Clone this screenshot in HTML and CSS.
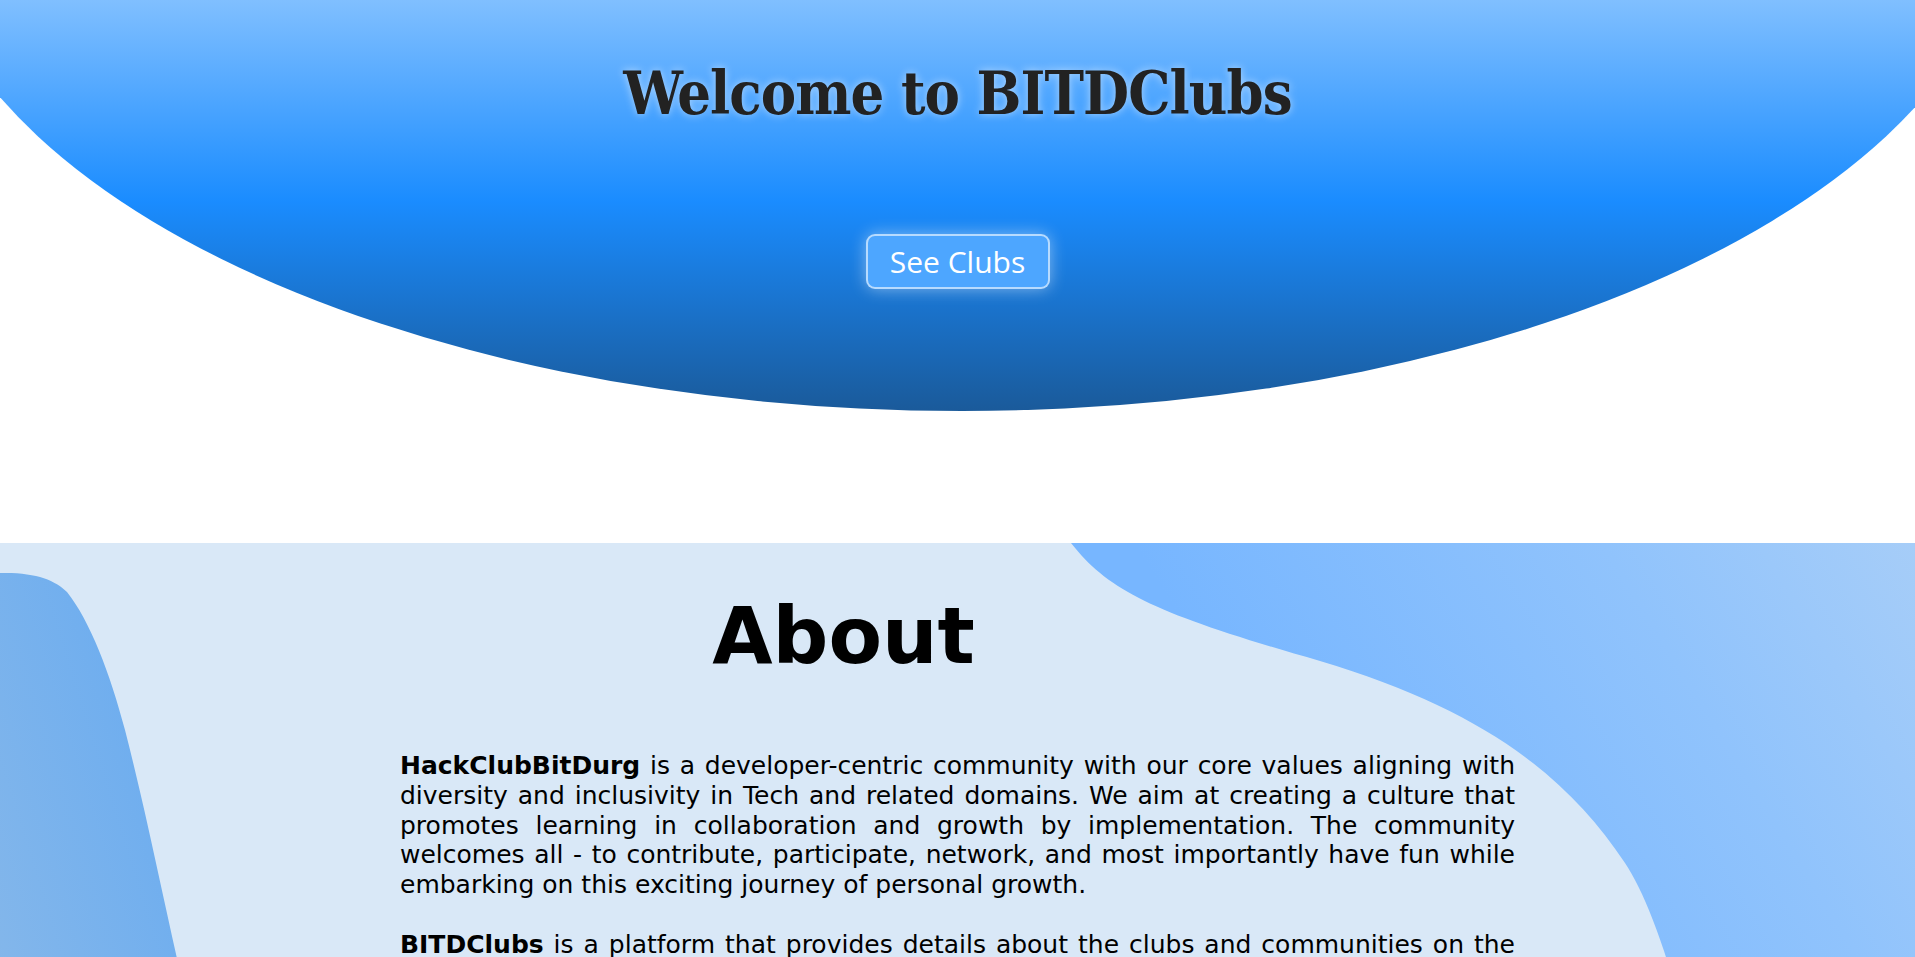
FILE: index.html
```html
<!DOCTYPE html>
<html lang="en">
<head>
<meta charset="utf-8">
<title>BITDClubs</title>
<link rel="stylesheet" href="styles.css">
</head>
<body>
  <header class="hero">
    <div class="hero-shape">
      <h1 class="hero-title">Welcome to BITDClubs</h1>
      <a class="hero-btn" href="#">See Clubs</a>
    </div>
  </header>
  <section class="about">
    <svg class="about-blobs" viewBox="0 0 1915 700" preserveAspectRatio="none" aria-hidden="true">
      <defs>
        <linearGradient id="gl" x1="1" y1="0" x2="0" y2="1">
          <stop offset="0" stop-color="#64a9f1"/>
          <stop offset="1" stop-color="#8bbae9"/>
        </linearGradient>
        <linearGradient id="gr" gradientUnits="userSpaceOnUse" x1="1350" y1="350" x2="1915" y2="0">
          <stop offset="0" stop-color="#77b6ff"/>
          <stop offset="0.6" stop-color="#90c3fc"/>
          <stop offset="1" stop-color="#a6cdf8"/>
        </linearGradient>
      </defs>
      <path fill="url(#gl)" d="M0,30 C35,29 55,37 67,49 C90,78 110,130 125,187 C145,265 160,340 178,420 L210,700 L0,700 Z"/>
      <path fill="url(#gr)" d="M1071,0 C1110,50 1160,72 1320,118 C1480,166 1565,230 1625,320 C1655,365 1690,470 1735,700 L1915,700 L1915,0 Z"/>
    </svg>
    <div class="about-inner">
      <h2 class="about-title">About</h2>
      <p class="about-text"><b>HackClubBitDurg</b> is a developer-centric community with our core values aligning with diversity and inclusivity in Tech and related domains. We aim at creating a culture that promotes learning in collaboration and growth by implementation. The community welcomes all - to contribute, participate, network, and most importantly have fun while embarking on this exciting journey of personal growth.</p>
      <p class="about-text"><b>BITDClubs</b> is a platform that provides details about the clubs and communities on the campus, so that every student can find a place to learn, build and grow together.</p>
    </div>
  </section>
</body>
</html>
```

FILE: styles.css
```css
html {
  scrollbar-width: none;
}
body {
  margin: 0;
  font-family: "DejaVu Sans", sans-serif;
  background: #ffffff;
  overflow-x: hidden;
}

.hero {
  height: 543px;
  background: #ffffff;
}

.hero-shape {
  height: 411px;
  background: linear-gradient(to bottom, #80bfff 0%, #1a8cff 49%, #1a5a9a 100%);
  clip-path: ellipse(1048px 520px at 962px -109px);
  display: flex;
  flex-direction: column;
  align-items: center;
  padding-top: 54px;
  box-sizing: border-box;
}

.hero-title {
  margin: 0;
  font-family: "DejaVu Serif", serif;
  font-stretch: condensed;
  font-weight: bold;
  font-size: 59px;
  letter-spacing: -0.9px;
  line-height: 80px;
  color: #222222;
  text-shadow: 0 0 8px rgba(255, 255, 255, 0.55);
}

.hero-btn {
  margin-top: 100px;
  width: 184px;
  height: 55px;
  box-sizing: border-box;
  display: flex;
  align-items: center;
  justify-content: center;
  font-family: "Open Sans", sans-serif;
  font-size: 30px;
  color: #ffffff;
  text-decoration: none;
  background: #4da6ff;
  border: 2px solid rgba(255, 255, 255, 0.6);
  border-radius: 9px;
  box-shadow: 0 0 16px rgba(255, 255, 255, 0.45);
}

.about {
  position: relative;
  background: #d9e8f7;
  min-height: 700px;
  overflow: hidden;
}

.about-blobs {
  position: absolute;
  top: 0;
  left: 0;
  width: 1915px;
  height: 700px;
}

.about-inner {
  position: relative;
  padding-top: 47px;
}

.about-title {
  margin: 0;
  padding-right: 228px;
  text-align: center;
  font-size: 78px;
  font-weight: bold;
  line-height: 92px;
  color: #000000;
}

.about-text {
  width: 1115px;
  margin: 69px auto 30px;
  font-size: 25px;
  line-height: 29.8px;
  text-align: justify;
  color: #000000;
}

.about-text + .about-text {
  margin-top: 0;
}
```
